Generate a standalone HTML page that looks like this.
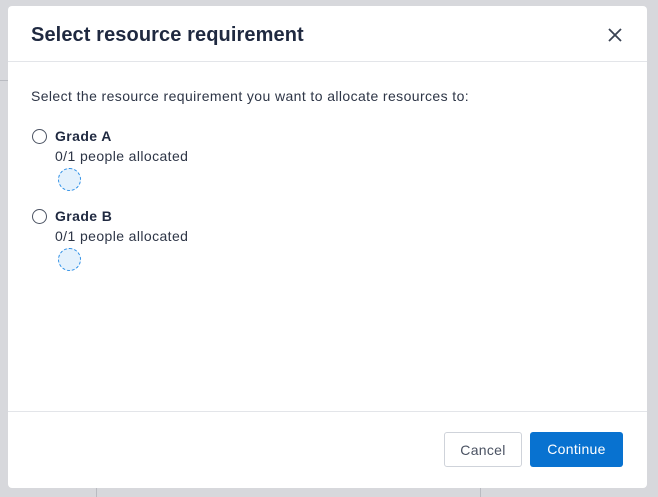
<!DOCTYPE html>
<html><head><style>
html,body{margin:0;padding:0}
body{width:658px;height:497px;background:#d7d8dc;position:relative;overflow:hidden;font-family:"Liberation Sans",sans-serif;color:#2d3546}
.bgl{position:absolute;background:#b9bbc1}
.modal{position:absolute;left:8px;top:6px;width:639px;height:482px;background:#fff;border-radius:4px}
.title{position:absolute;left:23px;top:18px;font-size:20px;font-weight:bold;color:#1f2940;letter-spacing:0.1px}
.close{position:absolute;left:599px;top:21px}
.hr{position:absolute;left:0;width:639px;height:1px;background:#e3e5e9}
.t{position:absolute;font-size:14px;white-space:nowrap;letter-spacing:0.4px}
.radio{position:absolute;width:13px;height:13px;border:1px solid #4b5363;border-radius:50%}
.av{position:absolute;width:21px;height:21px;border:1px dashed #2b8ee6;border-radius:50%;background:#e4f1fc}
.btn{position:absolute;top:426px;height:35px;border-radius:3px;font-size:14px;text-align:center;line-height:35px;box-sizing:border-box;letter-spacing:0.3px}
</style></head><body>
<div class="bgl" style="left:0;top:80px;width:8px;height:1px"></div>
<div class="bgl" style="left:96px;top:488px;width:1px;height:9px"></div>
<div class="bgl" style="left:480px;top:488px;width:1px;height:9px"></div>
<div class="modal">
<div class="title">Select resource requirement</div>
<svg class="close" width="16" height="16" viewBox="0 0 16 16"><path d="M2 2L14 14M14 2L2 14" stroke="#3a4354" stroke-width="1.8" fill="none"/></svg>
<div class="hr" style="top:55px"></div>
<div class="t" style="left:23px;top:82px">Select the resource requirement you want to allocate resources to:</div>
<div class="radio" style="left:24px;top:123px"></div>
<div class="t" style="left:47px;top:122px;font-weight:bold;color:#1f2940">Grade A</div>
<div class="t" style="left:47px;top:142px">0/1 people allocated</div>
<div class="av" style="left:50px;top:162px"></div>
<div class="radio" style="left:24px;top:203px"></div>
<div class="t" style="left:47px;top:202px;font-weight:bold;color:#1f2940">Grade B</div>
<div class="t" style="left:47px;top:222px">0/1 people allocated</div>
<div class="av" style="left:50px;top:242px"></div>
<div class="hr" style="top:405px"></div>
<div class="btn" style="left:436px;width:78px;border:1px solid #cfd3da;color:#4a5262">Cancel</div>
<div class="btn" style="left:522px;width:93px;background:#0872d0;color:#fff">Continue</div>
</div>
</body></html>
